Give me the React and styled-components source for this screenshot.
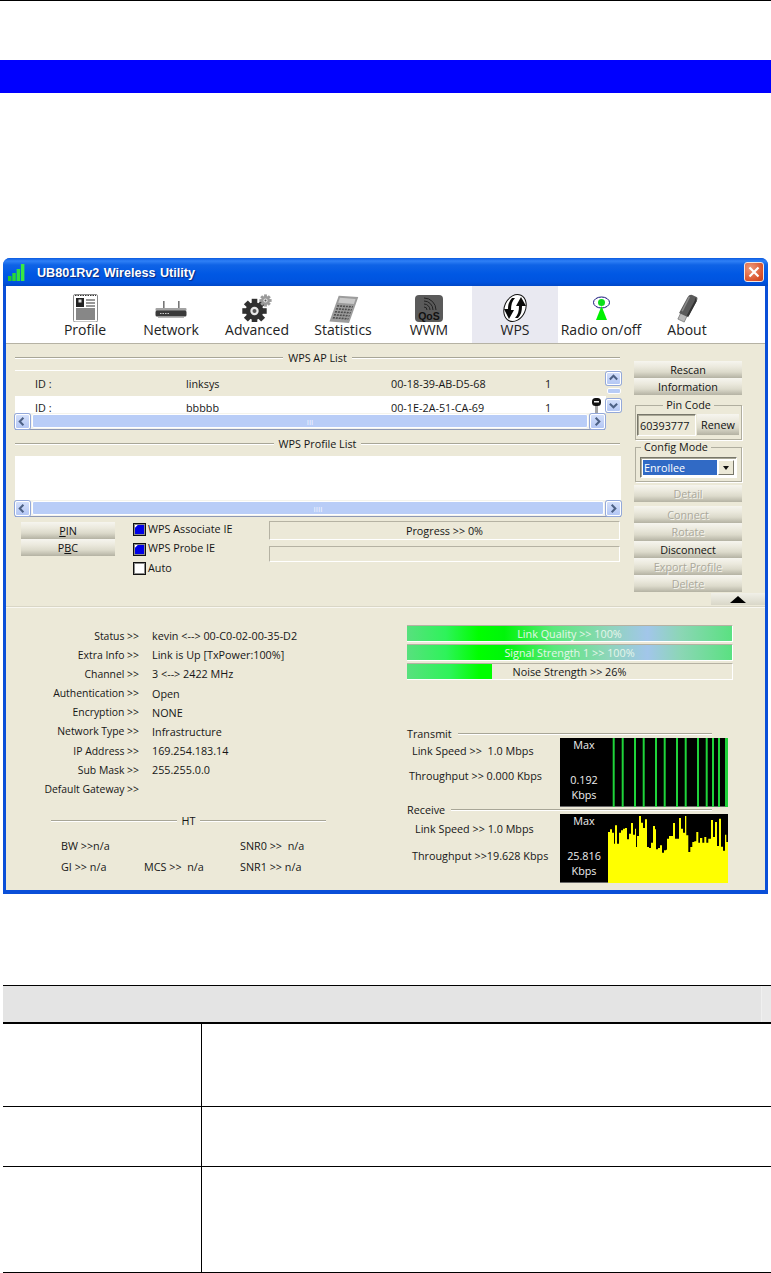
import React from "react";
import styled, { createGlobalStyle } from "styled-components";

const GlobalStyle = createGlobalStyle`
  html, body { margin: 0; padding: 0; background: #fff; }
  body {
    font-family: "Open Sans", "Liberation Sans", Arial, sans-serif;
    font-size: 10.8px;
    color: #161616;
    overflow-x: hidden;
  }
  * { box-sizing: border-box; }
`;

const statusRows = [
  ["Status >>", "kevin <--> 00-C0-02-00-35-D2"],
  ["Extra Info >>", "Link is Up [TxPower:100%]"],
  ["Channel >>", "3 <--> 2422 MHz"],
  ["Authentication >>", "Open"],
  ["Encryption >>", "NONE"],
  ["Network Type >>", "Infrastructure"],
  ["IP Address >>", "169.254.183.14"],
  ["Sub Mask >>", "255.255.0.0"],
  ["Default Gateway >>", ""],
];

const txLines = [4.7, 13.7, 26, 34.7, 47, 55.7, 68, 76.7, 89, 97.7, 104, 110];

// end x, top y of each run of the receive graph, read off the picture at 3x
const rxRuns = [
  [15, 60], [21, 52], [27, 62], [30, 95], [36, 40], [42, 95], [48, 62], [54, 55], [60, 50], [66, 48],
  [72, 82], [78, 65], [84, 33], [90, 68], [93, 50], [96, 105], [102, 72], [108, 12], [114, 32], [120, 48],
  [126, 22], [132, 105], [138, 108], [144, 92], [150, 42], [153, 52], [159, 112], [165, 108], [171, 100],
  [177, 122], [183, 115], [186, 113], [192, 80], [204, 72], [210, 33], [222, 80], [228, 18], [234, 50],
  [240, 62], [244, 12], [250, 70], [256, 120], [262, 105], [268, 90], [274, 88], [280, 60], [285, 92],
  [292, 78], [298, 92], [304, 75], [310, 92], [318, 80], [324, 24], [330, 75], [336, 30], [342, 102],
  [348, 20], [354, 104], [360, 116], [364, 68], [370, 90],
];

const rxPath =
  "M0 69 " + rxRuns.map(([end, top]) => `V${(top / 3 - 2).toFixed(1)} H${((end - 9) / 3).toFixed(1)}`).join(" ") + " V69 Z";

function Gear({ cx, cy, r, fill, hole }) {
  const teeth = [0, 45, 90, 135, 180, 225, 270, 315];
  return (
    <g>
      {teeth.map((a) => (
        <rect
          key={a}
          x={cx - r * 0.28}
          y={cy - r * 1.22}
          width={r * 0.56}
          height={r * 0.6}
          fill={fill}
          transform={`rotate(${a} ${cx} ${cy})`}
        />
      ))}
      <circle cx={cx} cy={cy} r={r * 0.88} fill={fill} />
      <circle cx={cx} cy={cy} r={r * 0.42} fill={hole} />
      <circle cx={cx} cy={cy} r={r * 0.2} fill="#555" />
    </g>
  );
}

const icons = {
  profile: (
    <svg width="32" height="28" viewBox="0 0 32 28">
      <rect x="4.5" y="0.5" width="24" height="27.5" rx="1.5" fill="#fff" stroke="#8a8a8a" />
      <path d="M6 1.5h21" stroke="#333" strokeDasharray="1.5 1" />
      <rect x="7" y="4" width="8" height="9" fill="#222" />
      <rect x="9.5" y="5.5" width="3" height="3" fill="#ddd" />
      <path d="M17 6h9M17 9h9M17 12h9" stroke="#777" strokeWidth="1.4" />
      <path d="M7 15h19M7 17h19M7 19h19M7 21h19M7 23h19M7 25h19" stroke="#111" strokeWidth="1.2" />
    </svg>
  ),
  network: (
    <svg width="32" height="28" viewBox="0 0 32 28">
      <rect x="8" y="7" width="1.6" height="8" fill="#777" />
      <rect x="23" y="7" width="1.6" height="8" fill="#777" />
      <rect x="0.5" y="14" width="31" height="3" rx="1" fill="#a2a2a2" />
      <rect x="0.5" y="16.5" width="31" height="6" rx="1.5" fill="#3a3a3a" />
      <path d="M5 19.5h10" stroke="#ccc" strokeDasharray="1.5 1" />
      <rect x="3" y="22.5" width="26" height="1.2" fill="#999" />
    </svg>
  ),
  advanced: (
    <svg width="32" height="28" viewBox="0 0 32 28">
      <Gear cx={13.5} cy={17} r={10} fill="#303030" hole="#e8e8e8" />
      <Gear cx={24.5} cy={6.5} r={5} fill="#9a9a9a" hole="#e4e4e4" />
    </svg>
  ),
  statistics: (
    <svg width="32" height="30" viewBox="0 0 32 30">
      <g transform="translate(2 1) skewX(-16) rotate(4 14 14)">
        <rect x="9" y="1" width="20" height="26" fill="#9c9c9c" />
        <rect x="11" y="3" width="16" height="5" fill="#c9c9c9" />
        <path d="M11 11h16M11 14h16M11 17h16M11 20h16M11 23h16" stroke="#4d4d4d" strokeWidth="1.6" strokeDasharray="2 1" />
      </g>
    </svg>
  ),
  wwm: (
    <svg width="32" height="28" viewBox="0 0 32 28">
      <rect x="2" y="1" width="28" height="27" rx="4" fill="#5a5a5a" />
      <path
        d="M11 13A3 3 0 0 1 14 16M11 10A6 6 0 0 1 17 16M11 7A9 9 0 0 1 20 16M11 4A12 12 0 0 1 23 16"
        fill="none"
        stroke="#222"
        strokeWidth="1"
      />
      <text x="16" y="25.5" textAnchor="middle" fontSize="10.500" fontWeight="700" fill="#111" fontFamily="Liberation Sans">
        QoS
      </text>
    </svg>
  ),
  wps: (
    <svg width="32" height="28" viewBox="0 0 32 28">
      <ellipse cx="16" cy="14" rx="10.500" ry="14" fill="#fff" stroke="#111" transform="rotate(25 16 14)" />
      <path d="M13 4C10 7 9 11 9 15L5 15L10 25L15 16L12 16C12 11 13 7 16 4Z" fill="#0b0b0b" />
      <path d="M19 24C22 21 23 17 23 12L27 12L22 3L17 12L20 12C20 17 19 21 16 24Z" fill="#0b0b0b" />
    </svg>
  ),
  radio: (
    <svg width="32" height="28" viewBox="0 0 32 28">
      <ellipse cx="16.500" cy="8.500" rx="8" ry="5.500" fill="#fff" stroke="#14147a" />
      <circle cx="16.500" cy="8.500" r="3.500" fill="#0be01a" />
      <path d="M16.500 12 L22 26 H11 Z" fill="#00f000" />
    </svg>
  ),
  about: (
    <svg width="32" height="30" viewBox="0 0 32 30">
      <g transform="rotate(25 16 15)">
        <rect x="12" y="21" width="7" height="7" fill="#b9b9b9" stroke="#666" strokeWidth="0.6" />
        <path d="M10.500 22 L11.500 4 Q12 0 16 0 L19.500 0 Q21.500 0 21.500 4 L20.500 22 Z" fill="#5b5b5b" />
        <path d="M18.500 1 L19.500 4 L18.500 21 L20.500 21 L21.500 4 Z" fill="#333" />
        <path d="M13 3 L12.500 19" stroke="#8b8b8b" strokeWidth="1.500" />
      </g>
    </svg>
  ),
};

const tabs = [
  ["Profile", "profile"],
  ["Network", "network"],
  ["Advanced", "advanced"],
  ["Statistics", "statistics"],
  ["WWM", "wwm"],
  ["WPS", "wps"],
  ["Radio on/off", "radio"],
  ["About", "about"],
];

function Chevron({ dir }) {
  const d = {
    left: "M7 2 L3 6 L7 10",
    right: "M4 2 L8 6 L4 10",
    up: "M2 7 L6 3 L10 7",
    down: "M2 4 L6 8 L10 4",
  }[dir];
  return (
    <svg width="11" height="11" viewBox="0 0 12 12">
      <path d={d} fill="none" stroke="#4d6185" strokeWidth="2.200" />
    </svg>
  );
}

function HScroll({ grip }) {
  return (
    <HBar>
      <ScrollBtn $w={15}><Chevron dir="left" /></ScrollBtn>
      <HThumb>{grip}</HThumb>
      <ScrollBtn $w={15}><Chevron dir="right" /></ScrollBtn>
    </HBar>
  );
}

function Meter({ label, value }) {
  return (
    <MeterTrack>
      <MeterFill style={{ width: `${value}%` }} $full={value === 100} />
      <MeterText $light={value === 100}>{label}</MeterText>
    </MeterTrack>
  );
}

function App() {
  return (
    <>
      <GlobalStyle />
      <Page>
        <TopRule />
        <Band />
        <Window>
          <TitleBar>
            <svg width="17" height="17" viewBox="0 0 17 17">
              <rect x="0" y="12" width="3.500" height="5" fill="#22c92e" />
              <rect x="4.300" y="9" width="3.500" height="8" fill="#28d835" />
              <rect x="8.600" y="5" width="3.500" height="12" fill="#30e03c" />
              <rect x="12.900" y="0" width="3.500" height="17" fill="#38e845" />
            </svg>
            <TitleText>UB801Rv2 Wireless Utility</TitleText>
            <CloseBox>
              <svg width="12" height="12" viewBox="0 0 12 12">
                <path d="M1.500 1.500 L10.500 10.500 M10.500 1.500 L1.500 10.500" stroke="#fff" strokeWidth="2.200" />
              </svg>
            </CloseBox>
          </TitleBar>
          <Toolbar>
            {tabs.map(([label, key]) => (
              <Tab key={key} $active={key === "wps"}>
                <TabIcon>{icons[key]}</TabIcon>
                <TabLabel>{label}</TabLabel>
              </Tab>
            ))}
          </Toolbar>
          <Panel>
            <Upper>
              <LeftCol>
                <SectionTitle><Rule /><span>WPS AP List</span><Rule /></SectionTitle>
                <ListBox>
                  <ListRows>
                    <ApRow $h={25}>
                      <span>ID :</span><span>linksys</span><span>00-18-39-AB-D5-68</span><span>1</span>
                    </ApRow>
                    <ApRow $h={17} $white>
                      <span>ID :</span><span>bbbbb</span><span>00-1E-2A-51-CA-69</span><span>1</span>
                      <svg width="9" height="15" viewBox="0 0 9 15">
                        <rect x="3" y="7" width="3" height="8" fill="#a5a5a5" />
                        <rect x="0" y="0" width="9" height="8" rx="3.500" fill="#111" />
                        <rect x="2" y="3" width="5" height="1.500" fill="#eee" />
                      </svg>
                    </ApRow>
                  </ListRows>
                  <VBar>
                    <ScrollBtn $w={15} $h={13}><Chevron dir="up" /></ScrollBtn>
                    <VThumb />
                    <ScrollBtn $w={15} $h={13}><Chevron dir="down" /></ScrollBtn>
                  </VBar>
                </ListBox>
                <ApScroll><HScroll grip="III" /></ApScroll>
                <SectionTitle $tight><Rule /><span>WPS Profile List</span><Rule /></SectionTitle>
                <ProfileList />
                <HScroll grip="IIII" />
                <Controls>
                  <PushStack>
                    <PushButton $w={94}><u>P</u>IN</PushButton>
                    <PushButton $w={94}>P<u>B</u>C</PushButton>
                  </PushStack>
                  <Checks>
                    <CheckRow><CheckBox $on /><CheckLabel>WPS Associate IE</CheckLabel></CheckRow>
                    <CheckRow><CheckBox $on /><CheckLabel>WPS Probe IE</CheckLabel></CheckRow>
                    <CheckRow><CheckBox /><CheckLabel>Auto</CheckLabel></CheckRow>
                  </Checks>
                  <ProgressStack>
                    <ProgressBox $h={19}>Progress &gt;&gt; 0%</ProgressBox>
                    <ProgressBox $h={16} />
                  </ProgressStack>
                </Controls>
              </LeftCol>
              <RightCol>
                <PushButton>Rescan</PushButton>
                <PushButton>Information</PushButton>
                <Group $mt={3}>
                  <GroupTitle $center>Pin Code</GroupTitle>
                  <PinRow>
                    <PinField>60393777</PinField>
                    <PushButton $w={42} $h={21}>Renew</PushButton>
                  </PinRow>
                </Group>
                <Group>
                  <GroupTitle>Config Mode</GroupTitle>
                  <Combo>
                    <ComboValue>Enrollee</ComboValue>
                    <ComboArrow />
                  </Combo>
                </Group>
                <PushButton $off $mt={3}>Detail</PushButton>
                <PushButton $off $mt={4}>Connect</PushButton>
                <PushButton $off $h={18}>Rotate</PushButton>
                <PushButton>Disconnect</PushButton>
                <PushButton $off>Export Profile</PushButton>
                <PushButton $off>Delete</PushButton>
                <CollapseBtn><Triangle /></CollapseBtn>
              </RightCol>
            </Upper>
            <Lower>
              <InfoCol>
                <StatusGrid>
                  {statusRows.map(([k, v]) => (
                    <React.Fragment key={k}>
                      <StatusKey>{k}</StatusKey>
                      <span>{v}</span>
                    </React.Fragment>
                  ))}
                </StatusGrid>
                <HtTitle><Rule /><span>HT</span><Rule /></HtTitle>
                <HtGrid>
                  <span>BW &gt;&gt;n/a</span><span /><span>SNR0 &gt;&gt;&nbsp; n/a</span>
                  <span>GI &gt;&gt; n/a</span><span>MCS &gt;&gt;&nbsp; n/a</span><span>SNR1 &gt;&gt; n/a</span>
                </HtGrid>
              </InfoCol>
              <MeterCol>
                <Meters>
                  <Meter label="Link Quality >> 100%" value={100} />
                  <Meter label="Signal Strength 1 >> 100%" value={100} />
                  <Meter label="Noise Strength >> 26%" value={26} />
                </Meters>
                <TrafficTitle $mt={49}><span>Transmit</span><Rule /></TrafficTitle>
                <TrafficRow>
                  <TrafficText $top={6}>
                    <TrafficLine $x={5}>Link Speed &gt;&gt;&nbsp; 1.0 Mbps</TrafficLine>
                    <TrafficLine $x={2} $mt={11}>Throughput &gt;&gt; 0.000 Kbps</TrafficLine>
                  </TrafficText>
                  <Chart>
                    <ChartLegend>
                      <span>Max</span>
                      <LegendSpacer />
                      <span>0.192</span>
                      <span>Kbps</span>
                    </ChartLegend>
                    <svg width="120" height="69" viewBox="0 0 120 69">
                      {txLines.map((x) => (
                        <rect key={x} x={x} y="0" width="2" height="69" fill="#1fd23a" />
                      ))}
                      <rect x="117" y="0" width="3" height="69" fill="#1fd23a" />
                    </svg>
                  </Chart>
                </TrafficRow>
                <TrafficTitle $mt={-2}><span>Receive</span><Rule /></TrafficTitle>
                <TrafficRow>
                  <TrafficText $top={8}>
                    <TrafficLine $x={8}>Link Speed &gt;&gt; 1.0 Mbps</TrafficLine>
                    <TrafficLine $x={5} $mt={13}>Throughput &gt;&gt;19.628 Kbps</TrafficLine>
                  </TrafficText>
                  <Chart>
                    <ChartLegend>
                      <span>Max</span>
                      <LegendSpacer />
                      <span>25.816</span>
                      <span>Kbps</span>
                    </ChartLegend>
                    <svg width="120" height="69" viewBox="0 0 120 69">
                      <path d={rxPath} fill="#ffff00" />
                    </svg>
                  </Chart>
                </TrafficRow>
              </MeterCol>
            </Lower>
          </Panel>
        </Window>
        <Table>
          <TableHead><HeadEnd /></TableHead>
          <TableRow $h={83}><LabelCell /><span /></TableRow>
          <TableRow $h={60}><LabelCell /><span /></TableRow>
          <TableRow $h={106}><LabelCell /><span /></TableRow>
        </Table>
      </Page>
    </>
  );
}

const Page = styled.div`
  width: 771px;
  height: 1273px;
  overflow: hidden;
`;

const TopRule = styled.div`
  height: 1px;
  background: #000;
`;

const Band = styled.div`
  height: 33px;
  margin-top: 59px;
  background: #0000ff;
`;

const Window = styled.div`
  width: 765px;
  height: 636px;
  margin: 165px 0 0 3px;
  display: flex;
  flex-direction: column;
  background: #0a4fd8;
  border-radius: 7px 7px 0 0;
  padding: 0 3px 4px;
`;

const TitleBar = styled.div`
  height: 28px;
  flex: none;
  margin: 0 -3px;
  padding: 0 4px 0 5px;
  display: flex;
  align-items: center;
  border-radius: 7px 7px 0 0;
  background: linear-gradient(#0a5ae0 0, #2f80f6 3px, #0f63e6 7px, #0058e4 16px, #0053df 24px, #0048c8 28px);
`;

const TitleText = styled.div`
  margin-left: 12px;
  padding-top: 2px;
  flex: 1;
  font-family: "Liberation Sans", Arial, sans-serif;
  color: #fff;
  font-size: 12.600px;
  font-weight: 700;
  word-spacing: 1px;
  text-shadow: 1px 1px 1px #0a2a80;
`;

const CloseBox = styled.div`
  width: 20px;
  height: 20px;
  display: flex;
  align-items: center;
  justify-content: center;
  border: 1px solid #f3e6e0;
  border-radius: 3px;
  background: radial-gradient(circle at 30% 30%, #ee9a7c, #d9532c 70%, #c23f1b);
`;

const Toolbar = styled.div`
  height: 58px;
  flex: none;
  display: grid;
  grid-template-columns: repeat(8, 86px);
  padding-left: 36px;
  background: #fff;
  border-bottom: 1px solid #b5b2a4;
`;

const Tab = styled.div`
  display: flex;
  flex-direction: column;
  align-items: center;
  padding-top: 8px;
  background: ${(p) => (p.$active ? "#e9e9f1" : "transparent")};
`;

const TabIcon = styled.div`
  height: 28px;
  overflow: visible;
`;

const TabLabel = styled.div`
  font-size: 14px;
  line-height: 16px;
  color: #222;
  white-space: nowrap;
`;

const Panel = styled.div`
  flex: 1;
  background: #ece9d8;
  display: flex;
  flex-direction: column;
`;

const Upper = styled.div`
  height: 262px;
  flex: none;
  display: flex;
  padding-left: 9px;
`;

const LeftCol = styled.div`
  width: 606px;
  flex: none;
  padding-top: 6px;
`;

const SectionTitle = styled.div`
  height: 14px;
  width: 605px;
  display: flex;
  align-items: center;
  gap: 5px;
  white-space: nowrap;
  margin-top: ${(p) => (p.$tight ? "6px" : "0")};
`;

const Rule = styled.div`
  flex: 1;
  height: 1px;
  background: #a8a697;
  box-shadow: 0 1px 0 #fff;
`;

const ListBox = styled.div`
  height: 43px;
  margin-top: 6px;
  display: flex;
  border-top: 1px solid #fff;
`;

const ListRows = styled.div`
  width: 591px;
  flex: none;
`;

const ApRow = styled.div`
  height: ${(p) => p.$h}px;
  display: grid;
  grid-template-columns: 151px 205px 154px 47px 9px;
  align-items: ${(p) => (p.$white ? "start" : "center")};
  padding-left: 20px;
  overflow: hidden;
  background: ${(p) => (p.$white ? "#fff" : "transparent")};
  line-height: ${(p) => (p.$white ? "24px" : "normal")};
  & > svg { margin-top: 2px; }
`;

const VBar = styled.div`
  flex: 1;
  display: flex;
  flex-direction: column;
  align-items: center;
  padding: 1px 0;
`;

const VThumb = styled.div`
  width: 14px;
  height: 6px;
  margin: 3px 0 auto;
  border: 1px solid #fff;
  border-radius: 2px;
  background: #b8ccf6;
`;

const ScrollBtn = styled.div`
  width: ${(p) => p.$w}px;
  height: ${(p) => p.$h || 15}px;
  flex: none;
  display: flex;
  align-items: center;
  justify-content: center;
  border: 1px solid #fff;
  border-radius: 2px;
  background: linear-gradient(#d3dffa, #b4c7f4);
  box-shadow: 0 0 0 1px #93a8da;
`;

const ApScroll = styled.div`
  width: 590px;
`;

const HBar = styled.div`
  height: 17px;
  display: flex;
  align-items: center;
  gap: 2px;
  background: #f4f3ec;
  border-bottom: 1px solid #8d98b4;
`;

const HThumb = styled.div`
  flex: 1;
  height: 14px;
  display: flex;
  align-items: center;
  justify-content: center;
  font-size: 8px;
  color: #f0f4ff;
  border-radius: 2px;
  border: 1px solid #fff;
  background: #b9cdf7;
`;

const ProfileList = styled.div`
  height: 44px;
  margin-top: 6px;
  background: #fff;
`;

const Controls = styled.div`
  display: flex;
  margin-top: 4px;
`;

const PushStack = styled.div`
  width: 118px;
  padding: 1px 0 0 6px;
`;

const PushButton = styled.div`
  width: ${(p) => (p.$w ? `${p.$w}px` : "108px")};
  height: ${(p) => p.$h || 17}px;
  flex: none;
  display: flex;
  align-items: center;
  justify-content: center;
  padding-bottom: 1px;
  white-space: pre;
  margin-top: ${(p) => p.$mt || 0}px;
  color: ${(p) => (p.$off ? "#aaa89b" : "#111")};
  text-shadow: ${(p) => (p.$off ? "1px 1px 0 #f7f6f0" : "none")};
  background: linear-gradient(#f6f5ef 0, #ebe9dd 35%, #dcdacb 65%, #b4b2a3 100%);
`;

const Checks = styled.div`
  width: 136px;
  margin-top: -1px;
`;

const CheckRow = styled.div`
  height: 19.500px;
  display: flex;
  align-items: center;
  gap: 2px;
`;

const CheckLabel = styled.span`
  margin-bottom: 3px;
`;

const CheckBox = styled.div`
  width: 13px;
  height: 13px;
  flex: none;
  border: 1px solid #111;
  outline: 1px solid #8b8b8b;
  outline-offset: -2px;
  background: ${(p) => (p.$on ? "linear-gradient(135deg, #fff 0 22%, #0000e6 23%)" : "#fff")};
`;

const ProgressStack = styled.div`
  width: 351px;
  display: flex;
  flex-direction: column;
  gap: 6px;
`;

const ProgressBox = styled.div`
  height: ${(p) => p.$h}px;
  display: flex;
  align-items: center;
  justify-content: center;
  border: 1px solid;
  border-color: #b5b2a3 #fff #fff #b5b2a3;
`;

const RightCol = styled.div`
  width: 131px;
  margin-left: 13px;
  padding-top: 17px;
  flex: none;
  display: flex;
  flex-direction: column;
`;

const Group = styled.fieldset`
  width: 107px;
  margin: ${(p) => p.$mt || 0}px 0 0 1px;
  padding: 2px 1px 3px 1px;
  border: 1px solid #b0ae9f;
  box-shadow: 1px 1px 0 #fff;
  min-width: 0;
`;

const GroupTitle = styled.legend`
  height: 14px;
  line-height: 14px;
  padding: 0 3px;
  margin-left: ${(p) => (p.$center ? "auto" : "4px")};
  margin-right: ${(p) => (p.$center ? "auto" : "0")};
`;

const PinRow = styled.div`
  display: flex;
  gap: 1px;
  align-items: flex-start;
`;

const PinField = styled.div`
  width: 59px;
  height: 22px;
  display: flex;
  align-items: center;
  padding-left: 2px;
  border: 1px solid;
  border-color: #77766a #fff #fff #77766a;
  box-shadow: inset 1px 1px 0 #a9a796;
`;

const Combo = styled.div`
  width: 97px;
  height: 21px;
  margin: 1px 0 0 3px;
  display: flex;
  padding: 2px;
  border: 1px solid;
  border-color: #77766a #fff #fff #77766a;
  box-shadow: inset 1px 1px 0 #a9a796;
  background: #fff;
`;

const ComboValue = styled.div`
  flex: 1;
  display: flex;
  align-items: center;
  padding-left: 1px;
  color: #fff;
  background: #316ac5;
`;

const ComboArrow = styled.div`
  width: 16px;
  margin-left: 1px;
  display: flex;
  align-items: center;
  justify-content: center;
  background: #ece9d8;
  border: 1px solid;
  border-color: #fff #77766a #77766a #fff;
  &::after {
    content: "";
    border-style: solid;
    border-width: 4px 3.500px 0;
    border-color: #111 transparent transparent;
  }
`;

const CollapseBtn = styled.div`
  width: 54px;
  height: 12px;
  margin: 1px 0 0 auto;
  display: flex;
  align-items: center;
  justify-content: center;
  background: linear-gradient(#f1f0e8, #d9d7c8);
`;

const Triangle = styled.div`
  border-style: solid;
  border-width: 0 8px 7px;
  border-color: transparent transparent #000;
`;

const Lower = styled.div`
  flex: 1;
  display: flex;
  border-top: 1px solid #d9d6c6;
  box-shadow: inset 0 1px 0 #f8f7f1;
`;

const InfoCol = styled.div`
  width: 401px;
  flex: none;
  padding-top: 19px;
`;

const StatusGrid = styled.div`
  display: grid;
  grid-template-columns: 133px 1fr;
  grid-auto-rows: 19.170px;
  column-gap: 13px;
  align-items: center;
  white-space: nowrap;
`;

const StatusKey = styled.span`
  text-align: right;
  font-size: 10.400px;
`;

const HtTitle = styled.div`
  width: 275px;
  height: 14px;
  margin: 15px 0 0 45px;
  display: flex;
  align-items: center;
  gap: 5px;
`;

const HtGrid = styled.div`
  margin: 11px 0 0 55px;
  display: grid;
  grid-template-columns: 83px 96px 1fr;
  grid-auto-rows: 14px;
  row-gap: 7px;
  align-items: center;
  white-space: nowrap;
`;

const MeterCol = styled.div`
  flex: 1;
  padding-top: 18px;
`;

const Meters = styled.div`
  display: flex;
  flex-direction: column;
  gap: 2px;
`;

const MeterTrack = styled.div`
  position: relative;
  width: 326px;
  height: 17px;
  border-top: 1px solid #b5b2a3;
  border-bottom: 1px solid #fff;
  border-right: 1px solid #fff;
`;

const MeterFill = styled.div`
  height: 100%;
  background: ${(p) =>
    p.$full
      ? "linear-gradient(90deg, #58e07e 0, #2ef35a 12%, #00ff00 22%, #00f50a 30%, #59e97a 45%, #8ed5ba 62%, #a2c6ea 74%, #8cd6b6 84%, #5ae181 100%)"
      : "linear-gradient(90deg, #58e07e 0, #2ef35a 50%, #00ff00 85%)"};
`;

const MeterText = styled.div`
  position: absolute;
  inset: 0;
  display: flex;
  align-items: center;
  justify-content: center;
  color: ${(p) => (p.$light ? "#e6f6ea" : "#161616")};
`;

const TrafficTitle = styled.div`
  position: relative;
  width: 305px;
  height: 9px;
  margin-top: ${(p) => p.$mt}px;
  display: flex;
  align-items: center;
  gap: 6px;
  white-space: nowrap;
`;

const TrafficRow = styled.div`
  display: flex;
  height: 69px;
`;

const TrafficText = styled.div`
  width: 153px;
  flex: none;
  padding-top: ${(p) => p.$top}px;
`;

const TrafficLine = styled.div`
  height: 14px;
  line-height: 14px;
  padding-left: ${(p) => p.$x}px;
  margin-top: ${(p) => p.$mt || 0}px;
  white-space: nowrap;
`;

const Chart = styled.div`
  width: 168px;
  height: 69px;
  display: flex;
  background: #000;
  box-shadow: inset 0 -1px 0 #666;
  & > svg { flex: none; }
`;

const ChartLegend = styled.div`
  width: 48px;
  flex: none;
  display: flex;
  flex-direction: column;
  align-items: center;
  padding-bottom: 5px;
  color: #eee;
  line-height: 14px;
  gap: 1px;
`;

const LegendSpacer = styled.div`
  flex: 1;
`;

const Table = styled.div`
  margin: 91px 0 0 3px;
  width: 768px;
  border-top: 1px solid #000;
`;

const TableHead = styled.div`
  height: 38px;
  display: flex;
  justify-content: flex-end;
  background: #e4e4e4;
  border-bottom: 2px solid #000;
`;

const HeadEnd = styled.div`
  width: 10px;
  background: #e9e9e9;
  border-left: 1px solid #f0f0f0;
`;

const TableRow = styled.div`
  height: ${(p) => p.$h}px;
  display: grid;
  grid-template-columns: 199px 1fr;
  border-bottom: 1px solid #000;
`;

const LabelCell = styled.div`
  border-right: 1px solid #000;
`;

export default App;
